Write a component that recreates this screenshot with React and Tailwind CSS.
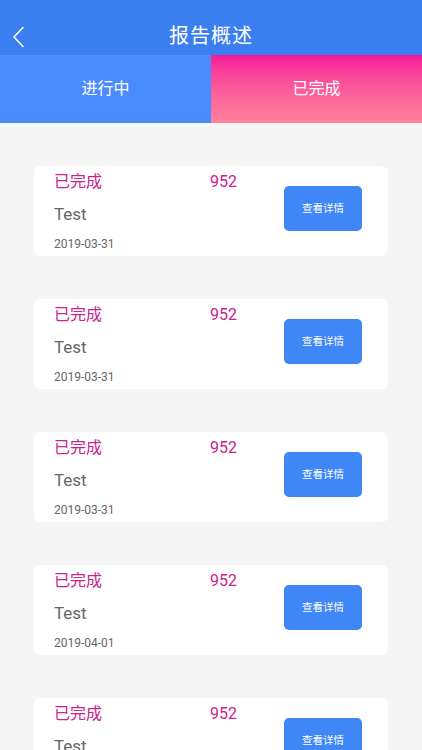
import React from "react";

const reports = [
  { status: "已完成", score: 952, name: "Test", date: "2019-03-31" },
  { status: "已完成", score: 952, name: "Test", date: "2019-03-31" },
  { status: "已完成", score: 952, name: "Test", date: "2019-03-31" },
  { status: "已完成", score: 952, name: "Test", date: "2019-04-01" },
  { status: "已完成", score: 952, name: "Test", date: "2019-04-01" },
];

const font = { fontFamily: 'Roboto, "Noto Sans CJK SC", sans-serif' };

const ReportCard = ({ item }) => (
  <div className="flex items-center justify-between bg-white rounded-md h-[90px] pl-5 pr-[26px] shrink-0">
    <div className="flex flex-col h-full pt-[5px]">
      <div className="flex items-center text-[16px] leading-[22px] text-[#c8238f]">
        <span className="w-[156px]">{item.status}</span>
        <span>{item.score}</span>
      </div>
      <div className="text-[17px] leading-[22px] text-[#666] mt-[10px]">{item.name}</div>
      <div className="text-[12px] leading-[16px] text-[#666] mt-[11px]">{item.date}</div>
    </div>
    <button className="w-[78px] h-[45px] mb-[5px] rounded-[5px] bg-[#3f86f6] text-white text-[10.5px]">
      查看详情
    </button>
  </div>
);

const App = () => {
  return (
    <div className="w-[422px] h-[750px] overflow-hidden bg-[#f5f5f5] flex flex-col" style={font}>
      <div className="relative h-[55px] bg-[#3a7ef0] flex items-center justify-center shrink-0">
        <svg className="absolute left-[12px] top-[26px]" width="14" height="22" viewBox="0 0 14 22" fill="none">
          <path d="M11 1.5L2 11l9 9.5" stroke="white" strokeWidth="1.6" strokeLinecap="round" strokeLinejoin="round" />
        </svg>
        <h1 className="text-white text-[20px] mt-[17px] tracking-[1px]">报告概述</h1>
      </div>
      <div className="flex h-[68px] shrink-0">
        <div className="flex-1 bg-[#4a8bff] flex items-center justify-center text-white text-[16px]">
          进行中
        </div>
        <div className="flex-1 bg-gradient-to-b from-[#f6159a] to-[#ff829b] flex items-center justify-center text-white text-[16px]">
          已完成
        </div>
      </div>
      <div className="flex flex-col gap-[43px] px-[34px] pt-[43px]">
        {reports.map((r, i) => (
          <ReportCard key={i} item={r} />
        ))}
      </div>
    </div>
  );
};

export default App;
